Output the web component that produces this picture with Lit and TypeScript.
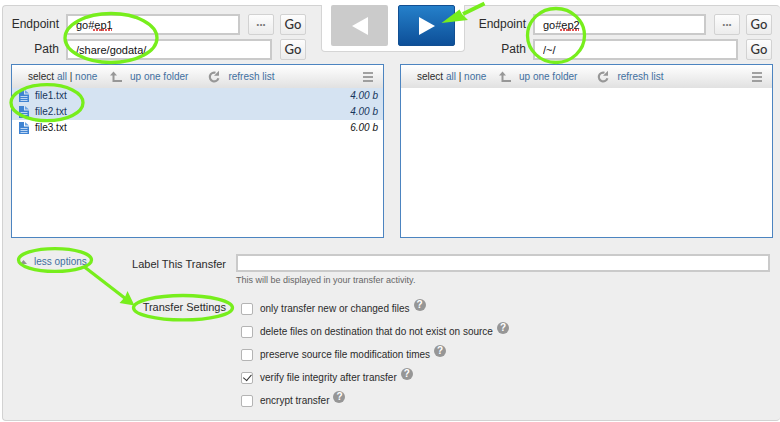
import { LitElement, html, svg, css } from "lit";
import { customElement, property } from "lit/decorators.js";

interface FileEntry {
  name: string;
  size: string;
  selected: boolean;
}

interface Setting {
  id: string;
  label: string;
  checked: boolean;
}

const SOURCE_FILES: FileEntry[] = [
  { name: "file1.txt", size: "4.00 b", selected: true },
  { name: "file2.txt", size: "4.00 b", selected: true },
  { name: "file3.txt", size: "6.00 b", selected: false },
];

const SETTINGS: Setting[] = [
  { id: "only-new", label: "only transfer new or changed files", checked: false },
  { id: "delete-extra", label: "delete files on destination that do not exist on source", checked: false },
  { id: "keep-times", label: "preserve source file modification times", checked: false },
  { id: "verify", label: "verify file integrity after transfer", checked: true },
  { id: "encrypt", label: "encrypt transfer", checked: false },
];

const controls = css`
  * {
    box-sizing: border-box;
  }
  button,
  input {
    margin: 0;
    font-family: inherit;
    color: inherit;
  }
  a {
    color: #3f6f9f;
    text-decoration: none;
  }
  .field {
    min-width: 0;
    height: 21px;
    padding: 0 8px;
    border: 2px solid #cacaca;
    border-radius: 0;
    background: #fff;
    color: #111;
    font-size: 11px;
    outline: none;
  }
`;

@customElement("endpoint-form")
class EndpointForm extends LitElement {
  @property() endpoint = "";
  @property() path = "";

  static styles = [
    controls,
    css`
      :host {
        display: flex;
        flex-direction: column;
        gap: 4px;
      }
      .row {
        display: flex;
        align-items: center;
      }
      label {
        width: 48px;
        margin-right: 7px;
        flex: none;
        text-align: right;
        font-size: 12px;
        line-height: 21px;
      }
      .field {
        flex: 1;
        margin-right: 8px;
      }
      button {
        display: flex;
        align-items: center;
        justify-content: center;
        flex: none;
        width: 26px;
        height: 21px;
        padding: 0;
        border: 1px solid #d2d2d2;
        border-radius: 2px;
        background: linear-gradient(#fdfdfd, #ececec);
        font: 500 13px/19px Lato, "Liberation Sans", sans-serif;
        color: #333;
      }
      .browse {
        margin-right: 6px;
        padding-bottom: 6px;
        font-weight: 700;
        color: #777;
      }
    `,
  ];

  render() {
    return html`
      <div class="row">
        <label for="endpoint">Endpoint</label>
        <input class="field" id="endpoint" type="text" spellcheck="false" .value=${this.endpoint} />
        <button class="browse" type="button" aria-label="Browse endpoints">...</button>
        <button type="button">Go</button>
      </div>
      <div class="row">
        <label for="path">Path</label>
        <input class="field" id="path" type="text" spellcheck="false" .value=${this.path} />
        <button type="button">Go</button>
      </div>
    `;
  }
}

@customElement("file-pane")
class FilePane extends LitElement {
  @property({ attribute: false }) files: FileEntry[] = [];

  static styles = [
    controls,
    css`
      :host {
        display: block;
        box-sizing: border-box;
        min-width: 0;
        min-height: 174px;
        border: 1px solid #4c84c0;
        background: #fff;
        font-size: 10px;
      }
      .toolbar {
        display: flex;
        align-items: center;
        height: 23px;
        padding: 0 10px 0 16px;
        background: linear-gradient(#fff, #e1e1e1);
        white-space: nowrap;
      }
      svg {
        display: block;
        flex: none;
      }
      .select {
        width: 82px;
      }
      .tool {
        display: flex;
        align-items: center;
        gap: 8px;
        margin-right: 20px;
      }
      .menu {
        margin-left: auto;
        padding: 0;
        border: 0;
        background: none;
      }
      table {
        width: 100%;
        border-collapse: collapse;
      }
      td {
        height: 16px;
        padding: 0 5px 0 0;
        line-height: 16px;
        color: #111;
      }
      .selected {
        background: #d5e3f2;
      }
      .selected td {
        color: #17365c;
      }
      .icon {
        width: 23px;
        padding: 0 5px 0 7px;
      }
      .size {
        text-align: right;
        font-style: italic;
      }
    `,
  ];

  render() {
    return html`
      <div class="toolbar">
        <span class="select">select <a href="#all">all</a> | <a href="#none">none</a></span>
        <a class="tool" href="#up">
          <svg width="12" height="12" viewBox="0 0 12 12">
            <path d="M3.5 3v7H12" fill="none" stroke="#979797" stroke-width="2" />
            <path d="M3.5 0.5L7 4.5H0z" fill="#979797" />
          </svg>
          up one folder
        </a>
        <a class="tool" href="#refresh">
          <svg width="12" height="13" viewBox="0 0 12 13">
            <path d="M7.5 2.8A4.4 4.4 0 1 0 10.4 8.3" fill="none" stroke="#979797" stroke-width="2.2" />
            <path d="M11 0.8V5.8H6z" fill="#979797" />
          </svg>
          refresh list
        </a>
        <button class="menu" type="button" aria-label="View menu">
          <svg width="10" height="10" viewBox="0 0 10 10" stroke="#858585">
            <path d="M0 1h10M0 5h10M0 9h10" stroke-width="1.4" />
          </svg>
        </button>
      </div>
      <table>
        <tbody>
          ${this.files.map(
            (file) => html`
              <tr class=${file.selected ? "selected" : ""}>
                <td class="icon">
                  <svg width="10" height="12" viewBox="0 0 10 12">
                    <path d="M0 0h5v4.5h5V12H0z" fill="#3f83d2" />
                    <path d="M6 0l4 3.6H6z" fill="#6da3e2" />
                    <path d="M1.5 6.5h7M1.5 8.5h7M1.5 10.5h7" stroke="#dceafa" stroke-width="0.8" />
                  </svg>
                </td>
                <td>${file.name}</td>
                <td class="size">${file.size}</td>
              </tr>
            `
          )}
        </tbody>
      </table>
    `;
  }
}

@customElement("app-root")
class AppRoot extends LitElement {
  static styles = [
    controls,
    css`
      :host {
        display: block;
        position: relative;
        overflow: hidden;
        padding: 5px 0 0 2px;
        background: #fff;
        font-family: "Liberation Sans", Arial, sans-serif;
        color: #2b2b2b;
      }
      .panel {
        border: 1px solid #d2d2d2;
        border-right: 0;
        border-radius: 4px;
        background: #eee;
      }
      .header {
        display: grid;
        grid-template-columns: minmax(0, 1fr) 144px minmax(0, 1fr);
        padding-left: 3px;
      }
      .source {
        padding: 8px 15px 4px 5px;
      }
      .destination {
        padding: 8px 8px 4px 13px;
      }
      .direction {
        display: flex;
        justify-content: space-between;
        align-self: start;
        height: 47px;
        margin-top: -1px;
        padding: 0 9px;
        border: 1px solid #d5d5d5;
        border-top: 0;
        border-radius: 0 0 4px 4px;
        background: #fff;
      }
      .arrow {
        display: flex;
        align-items: center;
        justify-content: center;
        width: 57px;
        height: 41px;
        padding: 0;
        border: 0;
        border-radius: 2px;
        background: #cbcbcb;
      }
      .active {
        border: 1px solid #124f92;
        background: linear-gradient(#2580ca, #0d4f98);
      }
      .panes {
        display: grid;
        grid-template-columns: repeat(2, minmax(0, 1fr));
        gap: 16px;
        padding: 0 7px 0 8px;
      }
      .options {
        display: grid;
        grid-template-columns: 72px 145px minmax(0, 1fr);
        row-gap: 9px;
        padding: 16px 10px 8px 16px;
      }
      .toggle {
        display: flex;
        align-items: center;
        gap: 7px;
        height: 15px;
        padding-left: 1px;
        font-size: 10px;
        white-space: nowrap;
      }
      .caption {
        grid-column: 2;
        padding-right: 10px;
        text-align: right;
        font-size: 11px;
        line-height: 21px;
        white-space: nowrap;
      }
      .field.wide {
        display: block;
        width: 100%;
        height: 18px;
      }
      .hint {
        font-size: 9px;
        line-height: 16px;
        color: #666;
      }
      .setting {
        display: flex;
        align-items: center;
        height: 23px;
        padding-left: 5px;
        font-size: 10px;
      }
      .setting input {
        appearance: none;
        display: grid;
        place-items: center;
        width: 12px;
        height: 12px;
        margin-right: 7px;
        border: 1px solid #b4b4b4;
        border-radius: 2px;
        background: #fff;
      }
      .setting input:checked::before {
        content: "";
        width: 4px;
        height: 7px;
        border: solid #333;
        border-width: 0 1px 1px 0;
        transform: rotate(40deg) translate(-1px, -1px);
      }
      .help {
        align-self: start;
        margin: 2px 0 0 4px;
        padding: 0;
        border: 0;
        background: none;
        line-height: 0;
      }
      .disc {
        display: grid;
        place-items: center;
        width: 12px;
        height: 12px;
        border-radius: 50%;
        background: #969696;
        color: #fff;
        font: bold 10px/12px "Liberation Sans", Arial, sans-serif;
      }
      .marks {
        position: absolute;
        top: 0;
        left: 0;
        pointer-events: none;
      }
    `,
  ];

  /* Hand-drawn style callouts laid over the form. */
  private marks() {
    return svg`
      <g fill="none" stroke="#e25252" stroke-width="2" stroke-dasharray="2 1">
        <path d="M93 30h19M560 30h19" />
      </g>
      <g fill="none" stroke="#77ee1c" stroke-width="3.3">
        <ellipse cx="111" cy="38" rx="46" ry="24.5" />
        <ellipse cx="47" cy="102.7" rx="36" ry="18" />
        <ellipse cx="556" cy="35.5" rx="28.5" ry="27" />
        <ellipse cx="55" cy="260" rx="36.5" ry="11.4" />
        <ellipse cx="183" cy="307.7" rx="49.5" ry="12.2" />
        <path d="M84.5 267L126 299" />
        <path d="M484.5 3.5L463 14" stroke-width="4" />
      </g>
      <g fill="#77ee1c">
        <path d="M134.5 305.5L127.5 291L125 297L119.5 303z" />
        <path d="M441.500 23L459.500 9.500L462 14L468 20z" />
      </g>
    `;
  }

  render() {
    return html`
      <main class="panel">
        <div class="header">
          <endpoint-form class="source" endpoint="go#ep1" path="/share/godata/"></endpoint-form>
          <div class="direction">
            <button class="arrow" type="button" aria-label="Transfer to the left">
              <svg width="16" height="18" viewBox="0 0 16 18"><path d="M16 0v18L0 9z" fill="#fff" /></svg>
            </button>
            <button class="arrow active" type="button" aria-label="Transfer to the right">
              <svg width="16" height="18" viewBox="0 0 16 18"><path d="M0 0v18L16 9z" fill="#fff" /></svg>
            </button>
          </div>
          <endpoint-form class="destination" endpoint="go#ep2" path="/~/"></endpoint-form>
        </div>
        <div class="panes">
          <file-pane .files=${SOURCE_FILES}></file-pane>
          <file-pane></file-pane>
        </div>
        <div class="options">
          <a class="toggle" href="#options">
            <svg width="7" height="4" viewBox="0 0 7 4"><path d="M3.5 0L7 4H0z" fill="#929292" /></svg>
            less options
          </a>
          <label class="caption" for="transfer-label">Label This Transfer</label>
          <div>
            <input class="field wide" id="transfer-label" type="text" aria-describedby="label-hint" />
            <div class="hint" id="label-hint">This will be displayed in your transfer activity.</div>
          </div>
          <div class="caption" id="settings-title">Transfer Settings</div>
          <div role="group" aria-labelledby="settings-title">
            ${SETTINGS.map(
              (item) => html`
                <div class="setting">
                  <input type="checkbox" id=${item.id} .checked=${item.checked} />
                  <label for=${item.id}>${item.label}</label>
                  <button class="help" type="button"><span class="disc">?</span></button>
                </div>
              `
            )}
          </div>
        </div>
      </main>
      <svg class="marks" width="780" height="422" viewBox="0 0 780 422" aria-hidden="true">${this.marks()}</svg>
    `;
  }
}
